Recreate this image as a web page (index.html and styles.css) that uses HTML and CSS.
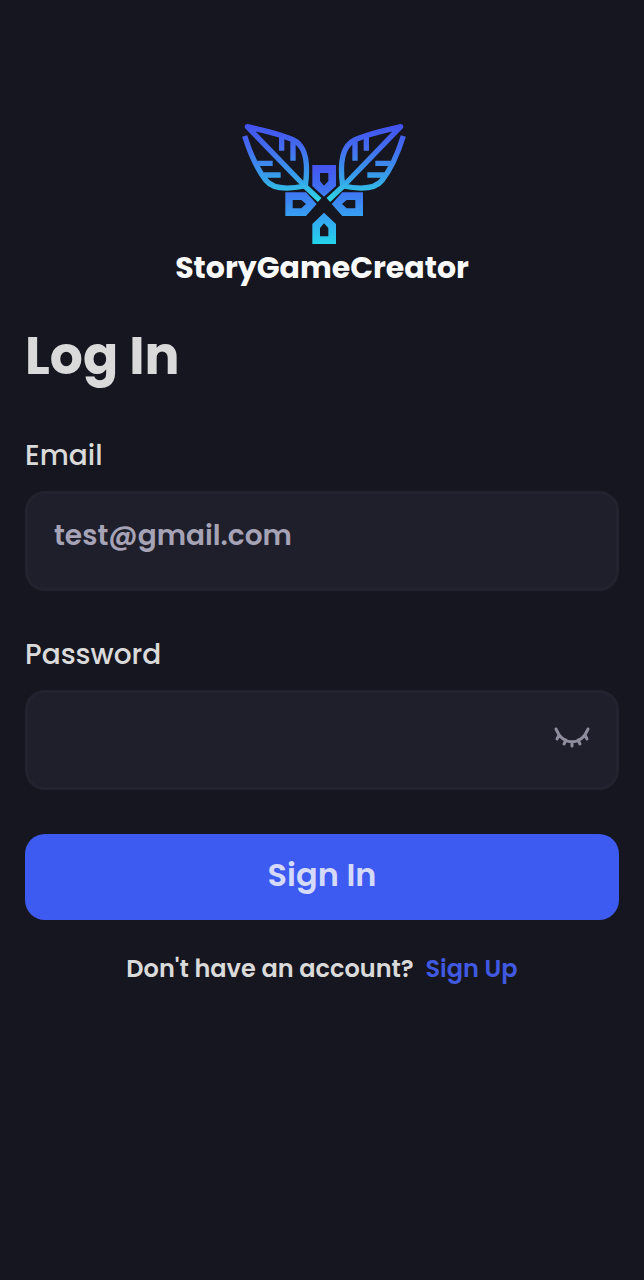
FILE: index.html
```html
<!DOCTYPE html>
<html lang="en">
<head>
<meta charset="utf-8">
<meta name="viewport" content="width=device-width, initial-scale=1">
<title>StoryGameCreator</title>
<link rel="stylesheet" href="styles.css">
</head>
<body>
<main class="screen">
  <header class="brand">
    <svg class="brand-mark" viewBox="-6 0 552 420" aria-hidden="true">
      <defs>
        <linearGradient id="leaf-fill" gradientUnits="userSpaceOnUse" x1="0" y1="40" x2="0" y2="266">
          <stop offset="0" stop-color="#4353ee"/>
          <stop offset="0.3" stop-color="#446cf0"/>
          <stop offset="0.75" stop-color="#35a8e8"/>
          <stop offset="1" stop-color="#2fd6e4"/>
        </linearGradient>
        <linearGradient id="tag-fill" gradientUnits="userSpaceOnUse" x1="0" y1="160" x2="0" y2="396">
          <stop offset="0" stop-color="#4554ee"/>
          <stop offset="0.3" stop-color="#3f70f2"/>
          <stop offset="0.6" stop-color="#389af2"/>
          <stop offset="1" stop-color="#24d4ea"/>
        </linearGradient>
        <g id="leaf">
          <path d="M220 221C229 156 222 102 184 84C146 66 90 55 46 44L218 222L263 264" stroke-linejoin="round"/>
          <path d="M38 72C55 126 76 172 101 204C120 229 160 234 218 222"/>
          <path d="M149 74V116M183 90V146M76 154H122M96 189H146"/>
        </g>
      </defs>
      <g fill="none" stroke="url(#leaf-fill)" stroke-width="16">
        <use href="#leaf"/>
        <use href="#leaf" transform="translate(552 0) scale(-1 1)"/>
      </g>
      <g fill="url(#tag-fill)" fill-rule="evenodd">
        <path d="M241 159H312V222L276 254L241 222ZM264 183V207L276 221L289 207V183Z"/>
        <path d="M160 241H222L254 276L222 312H160ZM182 264V289H208L222 276L208 264Z"/>
        <path d="M393 241H331L299 276L331 312H393ZM370 264V289H344L330 276L344 264Z"/>
        <path d="M241 396V336L276 302L312 336V396ZM264 373H289V348L276 334L264 348Z"/>
      </g>
    </svg>
    <p class="brand-name">StoryGameCreator</p>
  </header>

  <h1 class="title">Log In</h1>

  <form class="form">
    <div class="field">
      <label class="label" for="email">Email</label>
      <div class="box">
        <input class="input" id="email" type="email" placeholder="test@gmail.com">
      </div>
    </div>
    <div class="field">
      <label class="label" for="password">Password</label>
      <div class="box">
        <input class="input" id="password" type="password">
        <button class="reveal" type="button" aria-label="Show password">
          <svg class="reveal-icon" viewBox="0 0 36 24" aria-hidden="true">
            <path d="M2 2C9 19 27 19 34 2M5 8L3 12M12 13L10 17M18 15V19M24 13L26 17M31 8L33 12"/>
          </svg>
        </button>
      </div>
    </div>
    <button class="submit" type="submit">Sign In</button>
  </form>

  <p class="signup">Don't have an account? <a class="signup-link" href="#signup">Sign Up</a></p>
</main>
</body>
</html>
```
FILE: styles.css
```css
* {
  box-sizing: border-box;
}

body {
  margin: 0;
  min-height: 100vh;
  background: #161620;
  color: #dadada;
  font-family: Poppins, Inter, sans-serif;
}

.screen {
  display: flex;
  flex-direction: column;
  padding: 112px 25px 40px;
}

.brand {
  display: flex;
  flex-direction: column;
  align-items: center;
}

.brand-mark {
  width: 184px;
  height: 140px;
}

.brand-name {
  margin: 0;
  color: #fafafa;
  font-size: 30px;
  line-height: 32px;
  font-weight: 700;
}

.title {
  margin: 40px 0 0;
  font-size: 52px;
  line-height: 64px;
  font-weight: 700;
}

.form {
  display: flex;
  flex-direction: column;
  gap: 44px;
  margin-top: 48px;
}

.field {
  display: flex;
  flex-direction: column;
  gap: 15px;
}

.label {
  font-size: 28px;
  line-height: 40px;
  font-weight: 500;
}

.box {
  display: flex;
  align-items: center;
  height: 100px;
  padding: 0 26px;
  border: 3px solid #23232f;
  border-radius: 20px;
  background: #1f1e2b;
}

.input {
  flex: 1;
  min-width: 0;
  padding: 0 0 10px;
  border: 0;
  outline: 0;
  background: transparent;
  color: #dadada;
  font: inherit;
  font-size: 28px;
  line-height: 40px;
  font-weight: 600;
}

.input::placeholder {
  color: #a5a3b5;
  opacity: 1;
}

.reveal {
  display: flex;
  padding: 0 0 2px;
  border: 0;
  background: transparent;
  color: #8f8d9d;
  cursor: pointer;
}

.reveal-icon {
  width: 36px;
  height: 24px;
  fill: none;
  stroke: currentColor;
  stroke-width: 3;
  stroke-linecap: round;
}

.submit {
  height: 86px;
  padding: 0 0 4px;
  border: 0;
  border-radius: 20px;
  background: #3d5af1;
  color: #d5dafa;
  font: inherit;
  font-size: 32px;
  font-weight: 600;
  cursor: pointer;
}

.signup {
  margin: 33px 0 0;
  font-size: 24px;
  line-height: 32px;
  font-weight: 600;
  text-align: center;
}

.signup-link {
  margin-left: 6px;
  color: #4059e0;
  text-decoration: none;
}
```
